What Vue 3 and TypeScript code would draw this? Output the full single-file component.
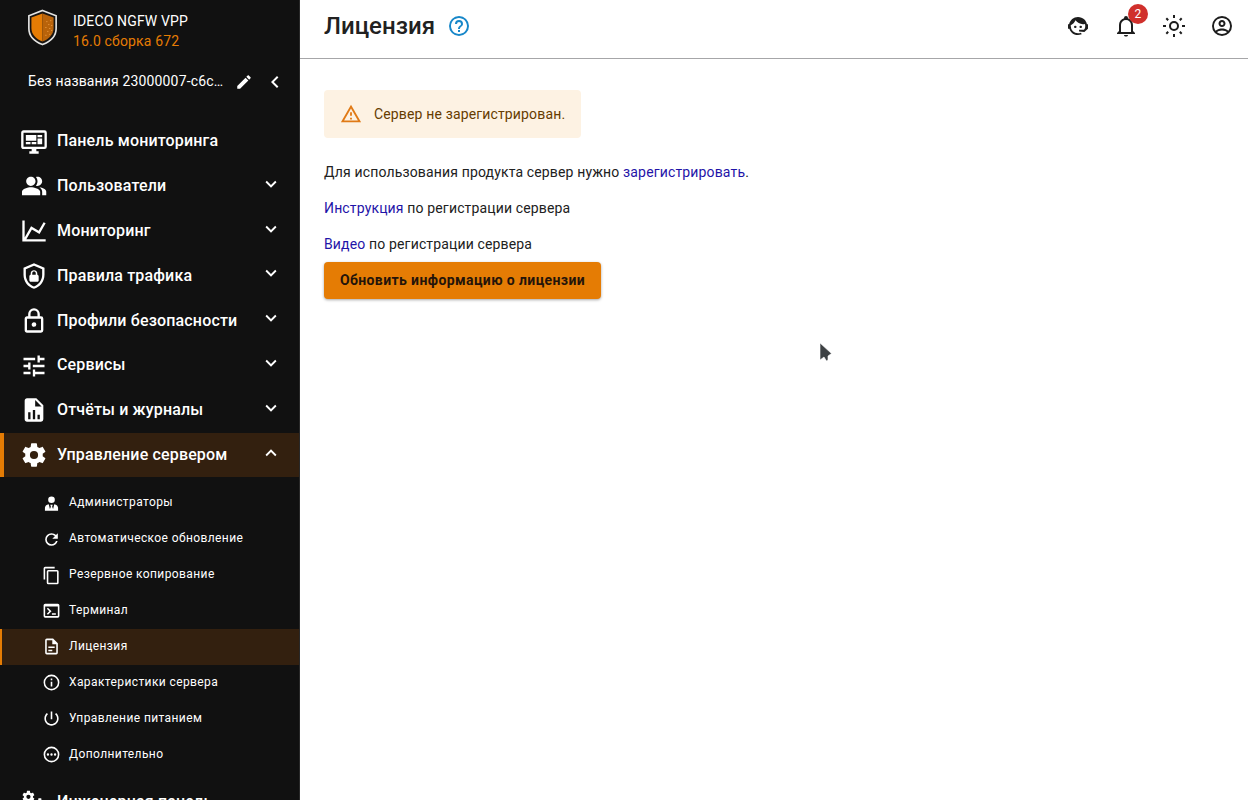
<script setup lang="ts">
interface NavItem {
  label: string
  icon: string
  active?: boolean
  leaf?: boolean
}

const mainItems: NavItem[] = [
  { label: 'Панель мониторинга', leaf: true, icon: 'M21,16V4H3V16H21M21,2A2,2 0 0,1 23,4V16A2,2 0 0,1 21,18H14V20H16V22H8V20H10V18H3C1.89,18 1,17.1 1,16V4C1,2.89 1.89,2 3,2H21M5,6H14V11H5V6M15,6H19V8H15V6M19,9V14H15V9H19M5,12H9V14H5V12M10,12H14V14H10V12Z' },
  { label: 'Пользователи', icon: 'M16.67 13.13C18.04 14.06 19 15.32 19 17v3h3.500v-3c0-2.18-3.070-3.47-5.830-3.87zM15 12c2.21 0 4-1.79 4-4s-1.79-4-4-4c-.47 0-.91.1-1.33.24C14.5 5.27 15 6.58 15 8s-.5 2.73-1.33 3.76c.42.14.86.24 1.33.24zM9.300 12c2.21 0 4-1.79 4-4s-1.79-4-4-4-4 1.79-4 4 1.79 4 4 4zm0 1c-2.67 0-7.600 1.34-7.600 4v3h15.600v-3c0-2.66-5.33-4-8-4z' },
  { label: 'Мониторинг', icon: 'M16,11.78L20.24,4.45L21.97,5.45L16.74,14.5L10.23,10.75L5.46,19H22V21H2V3H4V17.54L9.5,8L16,11.78Z' },
  { label: 'Правила трафика', icon: 'M21,11C21,16.55 17.16,21.74 12,23C6.84,21.74 3,16.55 3,11V5L12,1L21,5V11M12,21C15.75,20 19,15.54 19,11.22V6.3L12,3.18L5,6.3V11.22C5,15.54 8.25,20 12,21M14.8,11V9.5C14.8,8.1 13.4,7 12,7C10.6,7 9.2,8.1 9.2,9.5V11C8.6,11 8,11.6 8,12.2V15.7C8,16.4 8.6,17 9.2,17H14.7C15.4,17 16,16.4 16,15.8V12.3C16,11.6 15.4,11 14.8,11M13.5,11H10.5V9.5C10.5,8.7 11.2,8.2 12,8.2C12.8,8.2 13.5,8.7 13.5,9.5V11Z' },
  { label: 'Профили безопасности', icon: 'M12,17C10.89,17 10,16.1 10,15C10,13.89 10.89,13 12,13A2,2 0 0,1 14,15A2,2 0 0,1 12,17M18,20V10H6V20H18M18,8A2,2 0 0,1 20,10V20A2,2 0 0,1 18,22H6C4.89,22 4,21.1 4,20V10C4,8.89 4.89,8 6,8H7V6A5,5 0 0,1 12,1A5,5 0 0,1 17,6V8H18M12,3A3,3 0 0,0 9,6V8H15V6A3,3 0 0,0 12,3Z' },
  { label: 'Сервисы', icon: 'M3,17V19H9V17H3M3,5V7H13V5H3M13,21V19H21V17H13V15H11V21H13M7,9V11H3V13H7V15H9V9H7M21,13V11H11V13H21M15,9H17V7H21V5H17V3H15V9Z' },
  { label: 'Отчёты и журналы', icon: 'M13,9H18.5L13,3.5V9M6,2H14L20,8V20A2,2 0 0,1 18,22H6C4.89,22 4,21.1 4,20V4C4,2.89 4.89,2 6,2M7,20H9V14H7V20M11,20H13V12H11V20M15,20H17V16H15V20Z' },
  { label: 'Управление сервером', active: true, icon: 'M12,15.5A3.5,3.5 0 0,1 8.5,12A3.5,3.5 0 0,1 12,8.5A3.5,3.5 0 0,1 15.5,12A3.5,3.5 0 0,1 12,15.5M19.43,12.97C19.47,12.65 19.5,12.33 19.5,12C19.5,11.67 19.47,11.34 19.43,11L21.54,9.37C21.73,9.22 21.78,8.95 21.66,8.73L19.66,5.27C19.54,5.05 19.27,4.96 19.05,5.05L16.56,6.05C16.04,5.66 15.5,5.32 14.87,5.07L14.5,2.42C14.46,2.18 14.25,2 14,2H10C9.75,2 9.54,2.18 9.5,2.42L9.13,5.07C8.5,5.32 7.96,5.66 7.44,6.05L4.95,5.05C4.73,4.96 4.46,5.05 4.34,5.27L2.34,8.73C2.21,8.95 2.27,9.22 2.46,9.37L4.57,11C4.53,11.34 4.5,11.67 4.5,12C4.5,12.33 4.53,12.65 4.57,12.97L2.46,14.63C2.27,14.78 2.21,15.05 2.34,15.27L4.34,18.73C4.46,18.95 4.73,19.03 4.95,18.95L7.44,17.94C7.96,18.34 8.5,18.68 9.13,18.93L9.5,21.58C9.54,21.82 9.75,22 10,22H14C14.25,22 14.46,21.82 14.5,21.58L14.87,18.93C15.5,18.67 16.04,18.34 16.56,17.94L19.05,18.95C19.27,19.03 19.54,18.95 19.66,18.73L21.66,15.27C21.78,15.05 21.73,14.78 21.54,14.63L19.43,12.97Z' },
]

const subItems: NavItem[] = [
  { label: 'Администраторы', icon: 'M12 3a4.200 4.200 0 1 1 0 8.400a4.200 4.200 0 0 1 0-8.400M8.500 13L10 19L11.200 16L10.500 13.500H13.500L12.800 16L14 19L15.500 13C18.500 13.700 20.300 15.400 20.300 17.500V21H3.700V17.500C3.700 15.400 5.500 13.700 8.500 13Z' },
  { label: 'Автоматическое обновление', icon: 'M17.650,6.350C16.200,4.900 14.210,4 12,4A8,8 0 0,0 4,12A8,8 0 0,0 12,20C15.730,20 18.840,17.450 19.730,14H17.650C16.830,16.330 14.610,18 12,18A6,6 0 0,1 6,12A6,6 0 0,1 12,6C13.660,6 15.140,6.690 16.220,7.780L13,11H20V4L17.650,6.350Z' },
  { label: 'Резервное копирование', icon: 'M19,21H8V7H19M19,5H8A2,2 0 0,0 6,7V21A2,2 0 0,0 8,23H19A2,2 0 0,0 21,21V7A2,2 0 0,0 19,5M16,1H4A2,2 0 0,0 2,3V17H4V3H16V1Z' },
  { label: 'Терминал', icon: 'M20 3.5H4A2 2 0 0 0 2 5.5V19a2 2 0 0 0 2 2H20a2 2 0 0 0 2-2V5.500a2 2 0 0 0-2-2M20 19H4V7H20ZM12.500 15.500H17.500V17.500H12.500ZM7.500 17.500L6.100 16.100L9.200 13L6.100 9.900L7.500 8.500L12 13Z' },
  { label: 'Лицензия', active: true, icon: 'M6,2A2,2 0 0,0 4,4V20A2,2 0 0,0 6,22H18A2,2 0 0,0 20,20V8L14,2H6M6,4H13V9H18V20H6V4M8,12V14H16V12H8M8,16V18H13V16H8Z' },
  { label: 'Характеристики сервера', icon: 'M11,9H13V7H11M12,20C7.59,20 4,16.41 4,12C4,7.59 7.59,4 12,4C16.41,4 20,7.59 20,12C20,16.41 16.41,20 12,20M12,2A10,10 0 0,0 2,12A10,10 0 0,0 12,22A10,10 0 0,0 22,12A10,10 0 0,0 12,2M11,17H13V11H11V17Z' },
  { label: 'Управление питанием', icon: 'M13 3h-2v10h2V3zm4.830 2.170l-1.420 1.420C17.990 7.860 19 9.810 19 12c0 3.870-3.130 7-7 7s-7-3.130-7-7c0-2.190 1.010-4.140 2.580-5.420L6.170 5.170C4.230 6.820 3 9.260 3 12c0 4.970 4.030 9 9 9s9-4.030 9-9c0-2.740-1.230-5.180-3.170-6.830z' },
  { label: 'Дополнительно', icon: 'M12,2A10,10 0 0,0 2,12A10,10 0 0,0 12,22A10,10 0 0,0 22,12A10,10 0 0,0 12,2M12,4A8,8 0 0,1 20,12A8,8 0 0,1 12,20A8,8 0 0,1 4,12A8,8 0 0,1 12,4M12,10.500A1.500,1.500 0 1,1 12,13.500A1.500,1.500 0 1,1 12,10.500M7.500,10.500A1.500,1.500 0 1,1 7.500,13.500A1.500,1.500 0 1,1 7.500,10.500M16.500,10.500A1.500,1.500 0 1,1 16.500,13.500A1.500,1.500 0 1,1 16.500,10.500Z' },
]

const cogIcon = mainItems[7].icon
const notificationCount = 2
</script>

<template>
  <div class="app">
    <aside class="sidebar">
      <div class="brand">
        <svg class="logo" viewBox="0 0 32 38">
          <path d="M16 1.500L30 7V20C30 28 24 33.500 16 36.500C8 33.500 2 28 2 20V7Z" fill="#171412" stroke="#e4e4e2" stroke-width="1.700" />
          <path d="M16 4.500V33.500C9 30.500 4.600 26 4.600 19.500V8.800Z" fill="#e57c04" />
          <path d="M16 4.500V33.500C23 30.500 27.400 26 27.400 19.500V8.800Z" fill="#b9630a" />
          <path d="M20 13h1M24 12h1M22 16h1M25 17h1M19 19h1M23 20h1M21 23h1M25 22h1M19 27h1M23 26h1" stroke="#f6a548" stroke-width="1" />
        </svg>
        <div class="brand-text">
          <div>IDECO NGFW VPP</div>
          <div class="version">16.0 сборка 672</div>
        </div>
      </div>
      <div class="server">
        <span class="server-name">Без названия 23000007-c6c…</span>
        <svg class="pencil" viewBox="0 0 24 24"><path d="M20.710,7.040C21.100,6.650 21.100,6 20.710,5.630L18.370,3.290C18,2.900 17.350,2.900 16.960,3.290L15.120,5.120L18.870,8.870M3,17.250V21H6.750L17.810,9.930L14.060,6.180L3,17.250Z" /></svg>
        <svg class="collapse" viewBox="0 0 24 24"><path d="M15.410 7.410L14 6l-6 6 6 6 1.410-1.410L10.830 12z" /></svg>
      </div>
      <nav class="nav">
        <div v-for="item in mainItems" :key="item.label" class="row" :class="{ active: item.active }">
          <svg class="row-icon" viewBox="0 0 24 24"><path :d="item.icon" fill-rule="evenodd" /></svg>
          <span class="row-label">{{ item.label }}</span>
          <svg v-if="!item.leaf" class="chevron" viewBox="0 0 24 24">
            <path :d="item.active ? 'M7.410 15.410L12 10.830l4.590 4.580L18 14l-6-6-6 6z' : 'M7.410 8.590L12 13.170l4.590-4.580L18 10l-6 6-6-6z'" />
          </svg>
        </div>
        <div class="subnav">
          <div v-for="item in subItems" :key="item.label" class="sub" :class="{ active: item.active }">
            <svg class="sub-icon" viewBox="0 0 24 24"><path :d="item.icon" fill-rule="evenodd" /></svg>
            <span class="sub-label">{{ item.label }}</span>
          </div>
        </div>
        <div class="row">
          <svg class="row-icon" viewBox="0 0 24 24">
            <path :d="cogIcon" fill-rule="evenodd" transform="translate(1 .5) scale(.52)" />
            <path :d="cogIcon" fill-rule="evenodd" transform="translate(11 7) scale(.5)" />
          </svg>
          <span class="row-label">Инженерная панель</span>
        </div>
      </nav>
    </aside>

    <main class="main">
      <header class="header">
        <h1>Лицензия</h1>
        <svg class="help" viewBox="0 0 24 24"><path d="M11,18H13V16H11V18M12,2A10,10 0 0,0 2,12A10,10 0 0,0 12,22A10,10 0 0,0 22,12A10,10 0 0,0 12,2M12,20C7.590,20 4,16.410 4,12C4,7.590 7.590,4 12,4C16.410,4 20,7.590 20,12C20,16.410 16.410,20 12,20M12,6A4,4 0 0,0 8,10H10A2,2 0 0,1 12,8A2,2 0 0,1 14,10C14,12 11,11.750 11,15H13C13,12.750 16,12.500 16,10A4,4 0 0,0 12,6Z" /></svg>
        <div class="tools">
          <svg viewBox="0 0 24 24"><path d="M18.720,14.760C19.070,13.910 19.260,13 19.260,12C19.260,11.280 19.150,10.590 18.960,9.950C18.310,10.100 17.630,10.180 16.920,10.180C13.860,10.180 11.150,8.670 9.500,6.340C8.610,8.500 6.910,10.260 4.770,11.220C4.730,11.470 4.730,11.740 4.730,12A7.270,7.270 0 0,0 12,19.270C13.050,19.270 14.060,19.040 14.970,18.630C15.540,19.720 15.800,20.260 15.780,20.260C14.140,20.810 12.870,21.080 12,21.080C9.580,21.080 7.270,20.130 5.570,18.420C4.530,17.380 3.760,16.110 3.330,14.730H2V10.180H3.090C3.930,6.040 7.600,2.920 12,2.920C14.400,2.920 16.710,3.870 18.420,5.580C19.690,6.840 20.540,8.450 20.890,10.180H22V14.730H21.940L18.380,18L13.080,17.400V15.730H17.910L18.720,14.760M9.270,11.770A1.140,1.140 0 1,1 9.270,14.040A1.140,1.140 0 1,1 9.270,11.770M14.720,11.770A1.140,1.140 0 1,1 14.720,14.040A1.140,1.140 0 1,1 14.720,11.770Z" /></svg>
          <div class="bell">
            <svg viewBox="0 0 24 24"><path d="M10 21H14C14 22.100 13.100 22.500 12 22.500S10 22.100 10 21M21 19V20H3V19L5 17V11C5 7.900 7.030 5.170 10 4.290V4A2 2 0 0 1 14 4V4.290C16.970 5.170 19 7.900 19 11V17L21 19M17 11A5 5 0 0 0 7 11V18H17V11Z" /></svg>
            <span class="badge">{{ notificationCount }}</span>
          </div>
          <svg viewBox="0 0 24 24" fill="none" stroke="#1d1d1d" stroke-width="2">
            <g fill="none"><circle cx="12" cy="12" r="4" /><path d="M12 1v3M12 20v3M1 12h3M20 12h3M4.300 4.300l1.900 1.900M17.800 17.800l1.900 1.900M4.300 19.700l1.900-1.900M17.800 6.200l1.900-1.900" /></g>
          </svg>
          <svg viewBox="0 0 24 24"><path d="M12,2A10,10 0 0,0 2,12A10,10 0 0,0 12,22A10,10 0 0,0 22,12A10,10 0 0,0 12,2M7.070,18.280C7.500,17.380 10.120,16.500 12,16.500C13.880,16.500 16.500,17.380 16.930,18.280C15.570,19.360 13.860,20 12,20C10.140,20 8.430,19.360 7.070,18.280M18.360,16.830C16.930,15.090 13.460,14.500 12,14.500C10.540,14.500 7.070,15.090 5.640,16.830C4.620,15.500 4,13.820 4,12C4,7.590 7.590,4 12,4C16.410,4 20,7.590 20,12C20,13.820 19.380,15.500 18.360,16.830M12,6C10.060,6 8.500,7.560 8.500,9.500C8.500,11.440 10.060,13 12,13C13.940,13 15.500,11.440 15.500,9.500C15.500,7.560 13.940,6 12,6M12,11A1.500,1.500 0 0,1 10.500,9.500A1.500,1.500 0 0,1 12,8A1.500,1.500 0 0,1 13.500,9.500A1.500,1.500 0 0,1 12,11Z" /></svg>
        </div>
      </header>
      <section class="content">
        <div class="alert">
          <svg viewBox="0 0 24 24"><path d="M12 5.990L19.530 19H4.470L12 5.990M12 2L1 21h22L12 2zm1 14h-2v2h2v-2zm0-6h-2v4h2v-4z" /></svg>
          <span class="alert-text">Сервер не зарегистрирован.</span>
        </div>
        <p>Для использования продукта сервер нужно <a>зарегистрировать</a>.</p>
        <p><a>Инструкция</a> по регистрации сервера</p>
        <p><a>Видео</a> по регистрации сервера</p>
        <button class="refresh"><span>Обновить информацию о лицензии</span></button>
      </section>
    </main>

    <svg class="cursor" viewBox="0 0 14 20"><path d="M1 1V18L5 15L7.500 19L9 18V14L12.500 11.500Z" fill="#3d4144" stroke="#fff" stroke-width=".6" /></svg>
  </div>
</template>

<style>
body {
  margin: 0;
  overflow: hidden;
}
</style>

<style scoped>
.app {
  position: relative;
  display: flex;
  width: 1248px;
  height: 800px;
  overflow: hidden;
  background: #fff;
  color: #212121;
  font: 400 14px/20px Roboto, sans-serif;
  letter-spacing: 0.150px;
}
svg {
  display: block;
  flex: none;
}
.sidebar {
  box-sizing: border-box;
  width: 300px;
  height: 800px;
  overflow: hidden;
  flex: none;
  background: #111;
  border-right: 1px solid #292929;
  color: #fff;
  fill: #fff;
}
.brand {
  display: flex;
  height: 60px;
  padding: 9px 0 0 26px;
  box-sizing: border-box;
}
.logo {
  width: 33px;
  height: 37px;
}
.brand-text {
  margin: 2px 0 0 14px;
}
.version {
  color: #e57c04;
}
.server {
  display: flex;
  align-items: center;
  height: 42px;
  padding-left: 28px;
}
.server-name {
  width: 207px;
  white-space: nowrap;
}
.pencil {
  width: 18px;
  height: 18px;
  margin-top: 1px;
}
.collapse {
  width: 24px;
  height: 24px;
  margin: 1px 0 0 10px;
}
.nav {
  padding-top: 17px;
}
.row {
  display: flex;
  align-items: center;
  box-sizing: border-box;
  height: 44.800px;
  padding-left: 20px;
  border-bottom: 1px solid transparent;
  background-clip: padding-box;
}
.row.active {
  padding-left: 16px;
  border-left: 4px solid #e57c04;
  border-bottom: 0;
  height: 44px;
  margin-bottom: 0.800px;
  background-color: #33200f;
}
.row-icon {
  width: 28px;
  height: 28px;
  margin-top: 1.500px;
}
.row-label {
  width: 203px;
  margin: 1px 0 0 9px;
  font-size: 16px;
  font-weight: 500;
  letter-spacing: 0.160px;
  white-space: nowrap;
}
.chevron {
  width: 22px;
  height: 22px;
  margin-top: -3.800px;
}
.subnav {
  padding: 7.600px 0 7px;
}
.sub {
  display: flex;
  align-items: center;
  box-sizing: border-box;
  height: 36px;
  padding-left: 42px;
}
.sub.active {
  padding-left: 40px;
  border-left: 2px solid #e57c04;
  background: #33200f;
}
.sub-icon {
  width: 19px;
  height: 19px;
}
.sub:nth-child(-n + 3) .sub-icon {
  margin-top: 2px;
}
.sub-label {
  margin: -2px 0 0 8px;
  font-size: 12px;
  letter-spacing: 0.400px;
}
.main {
  flex: 1;
}
.header {
  display: flex;
  align-items: center;
  box-sizing: border-box;
  height: 59px;
  padding: 0 14px 7px 24px;
  border-bottom: 1px solid #a6a6a8;
}
h1 {
  margin: 0;
  font-size: 24px;
  line-height: 32px;
  font-weight: 500;
  letter-spacing: 0;
}
.help {
  width: 24px;
  height: 24px;
  margin-left: 12px;
  fill: #1787c9;
}
.tools {
  display: flex;
  gap: 24px;
  margin-left: auto;
  fill: #1d1d1d;
}
.tools svg {
  width: 24px;
  height: 24px;
}
.bell {
  position: relative;
}
.badge {
  position: absolute;
  left: 14px;
  top: -10px;
  width: 20px;
  height: 20px;
  border-radius: 50%;
  background: #d0302c;
  color: #fff;
  font-size: 12px;
  text-align: center;
}
.content {
  padding: 31px 24px 0;
}
.alert {
  display: flex;
  align-items: center;
  box-sizing: border-box;
  width: 257px;
  height: 48px;
  margin-bottom: 24px;
  padding-left: 16px;
  border-radius: 4px;
  background: #fdf2e3;
  color: #663c00;
  fill: #e07a16;
  white-space: nowrap;
}
.alert svg {
  width: 22px;
  height: 22px;
}
.alert-text {
  margin-left: 12px;
}
p {
  margin: 0 0 16px;
}
a {
  color: #1f14a8;
}
.refresh {
  display: block;
  width: 277px;
  height: 37px;
  margin-top: -8px;
  padding: 0 0 2px;
  border: 0;
  border-radius: 4px;
  background: #e57c04;
  box-shadow: 0 1px 3px rgba(0, 0, 0, 0.350);
  color: #24140a;
  font: 700 14px/20px Roboto, sans-serif;
  letter-spacing: 0.400px;
}
.cursor {
  position: absolute;
  left: 819px;
  top: 342px;
  width: 14px;
  height: 20px;
}
</style>
